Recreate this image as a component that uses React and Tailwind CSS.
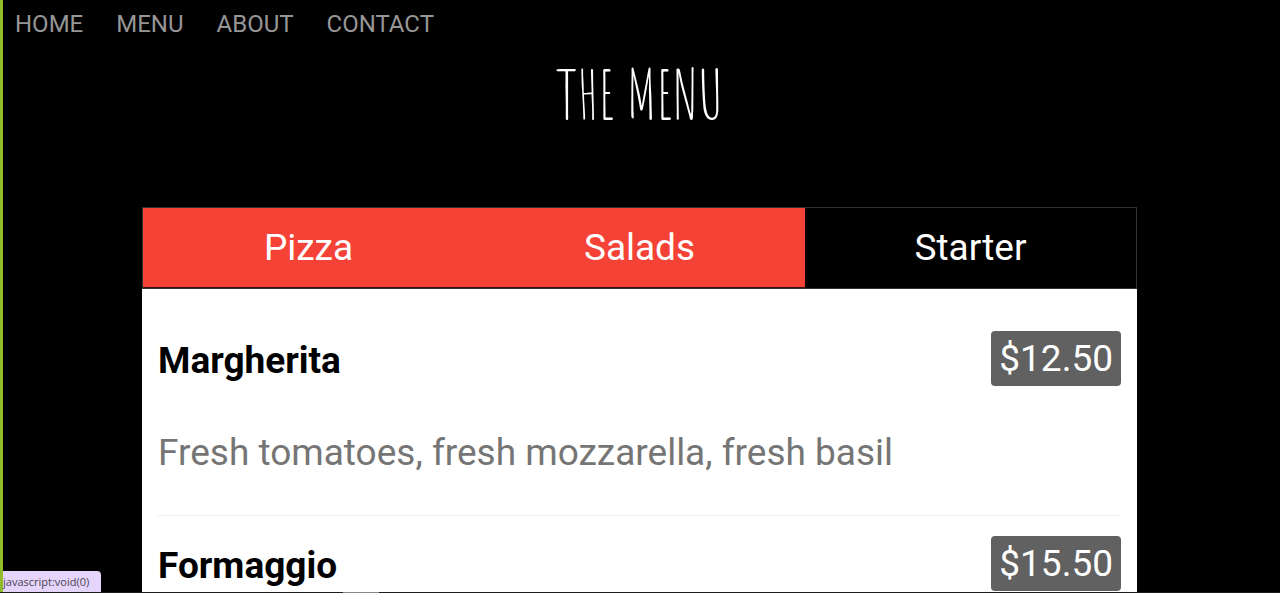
const links = ["HOME", "MENU", "ABOUT", "CONTACT"];

const tabs = [
  { name: "Pizza", active: true },
  { name: "Salads", active: true },
  { name: "Starter", active: false },
];

const dishes = [
  {
    name: "Margherita",
    price: "$12.50",
    description: "Fresh tomatoes, fresh mozzarella, fresh basil",
  },
  { name: "Formaggio", price: "$15.50" },
];

function Dish({ name, price, description }) {
  return (
    <article className="border-b border-[#eeeeee] pt-5 pb-8">
      <div className="flex items-start justify-between">
        <h2 className="text-[37px] leading-[60px] font-bold text-black">{name}</h2>
        <span className="rounded bg-[#616161] px-2 text-[37px] leading-[55px] text-white">
          {price}
        </span>
      </div>
      {description && (
        <p className="mt-8 text-[37px] leading-[60px] text-[#757575]">{description}</p>
      )}
    </article>
  );
}

export default function App() {
  return (
    <div className="relative flex h-screen flex-col overflow-hidden bg-black font-['Roboto',sans-serif]">
      <div className="flex min-h-0 flex-1 flex-col overflow-hidden border-l-3 border-[#8fbc2b] pr-1">
        <nav className="flex shrink-0 gap-[33px] px-3 pt-1">
          {links.map((link) => (
            <a key={link} href="#menu" className="text-2xl leading-10 text-[#969696]">
              {link}
            </a>
          ))}
        </nav>
        <main id="menu" className="mx-auto w-full max-w-[995px] shrink-0">
          <h1 className="pt-1.5 text-center font-['Amatic_SC','Roboto_Condensed',sans-serif] text-[66px] leading-[88px] text-white">
            THE MENU
          </h1>
          <div
            role="tablist"
            className="mt-[69px] grid grid-cols-3 border border-[#333333]"
          >
            {tabs.map((tab) => (
              <button
                key={tab.name}
                type="button"
                role="tab"
                aria-selected={tab.active}
                className={
                  tab.active
                    ? "border-b border-[#3a110d] bg-[#f44336] text-[37px] leading-[79px] text-white"
                    : "border-b border-black bg-black text-[37px] leading-[79px] text-white"
                }
              >
                {tab.name}
              </button>
            ))}
          </div>
          <section className="bg-white px-4 pt-[22px]">
            {dishes.map((dish) => (
              <Dish key={dish.name} {...dish} />
            ))}
          </section>
        </main>
      </div>
      <div className="h-px shrink-0 bg-[#211b18] pl-[343px]">
        <div className="h-px w-9 bg-[#8a8a8a]" />
      </div>
      <div className="absolute bottom-px left-0 rounded-tr border-l-3 border-[#8fbc2b] bg-[#e6d5fb] pr-3 font-['Open_Sans',sans-serif] text-[11px] leading-[21px] text-[#4a4352]">
        javascript:void(0)
      </div>
    </div>
  );
}
